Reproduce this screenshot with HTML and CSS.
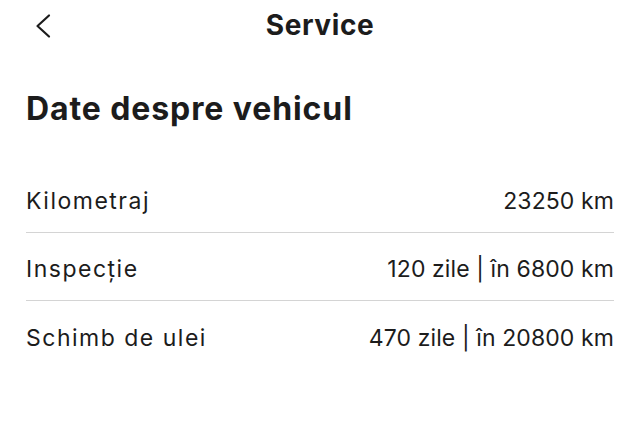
FILE: index.html
```html
<!DOCTYPE html>
<html lang="ro">
<head>
<meta charset="utf-8">
<link rel="stylesheet" href="styles.css">
</head>
<body>
<div class="page">
  <header class="topbar">
    <span class="back">
      <svg width="18" height="26" viewBox="0 0 18 26"><path d="M14 2.5 L2.5 13 L14 23.5" fill="none" stroke="#1c1c1c" stroke-width="2.2" stroke-linecap="round" stroke-linejoin="round"/></svg>
    </span>
    <h1 class="title">Service</h1>
  </header>
  <h2 class="heading">Date despre vehicul</h2>
  <ul class="list">
    <li class="row"><span class="label">Kilometraj</span><span class="value">23250 km</span></li>
    <li class="row"><span class="label">Inspecție</span><span class="value">120 zile | în 6800 km</span></li>
    <li class="row"><span class="label">Schimb de ulei</span><span class="value">470 zile | în 20800 km</span></li>
  </ul>
</div>
</body>
</html>
```
FILE: styles.css
```css
html, body {
  margin: 0;
  padding: 0;
  background: #ffffff;
}
body {
  font-family: "Inter", "Noto Sans", sans-serif;
  color: #1c1c1c;
}
.page {
  width: 640px;
  height: 421px;
  padding: 0 26px;
  box-sizing: border-box;
}
.topbar {
  position: relative;
  height: 50px;
  display: flex;
  align-items: center;
  justify-content: center;
}
.back {
  position: absolute;
  left: 9px;
  top: 13px;
  display: flex;
}
.title {
  margin: 0;
  font-size: 28px;
  font-weight: 700;
  letter-spacing: 0.6px;
}
.heading {
  margin: 37px 0 0;
  font-size: 32px;
  font-weight: 700;
  line-height: 44px;
  letter-spacing: 0.9px;
}
.list {
  list-style: none;
  margin: 34px 0 0;
  padding: 0;
}
.row {
  display: flex;
  justify-content: space-between;
  align-items: center;
  height: 68px;
  padding-top: 5px;
  font-size: 23px;
  border-bottom: 1px solid #d4d4d4;
  box-sizing: border-box;
}
.row:last-child {
  border-bottom: none;
}
.label {
  letter-spacing: 1.5px;
}
.value {
  letter-spacing: 0.1px;
}
```
